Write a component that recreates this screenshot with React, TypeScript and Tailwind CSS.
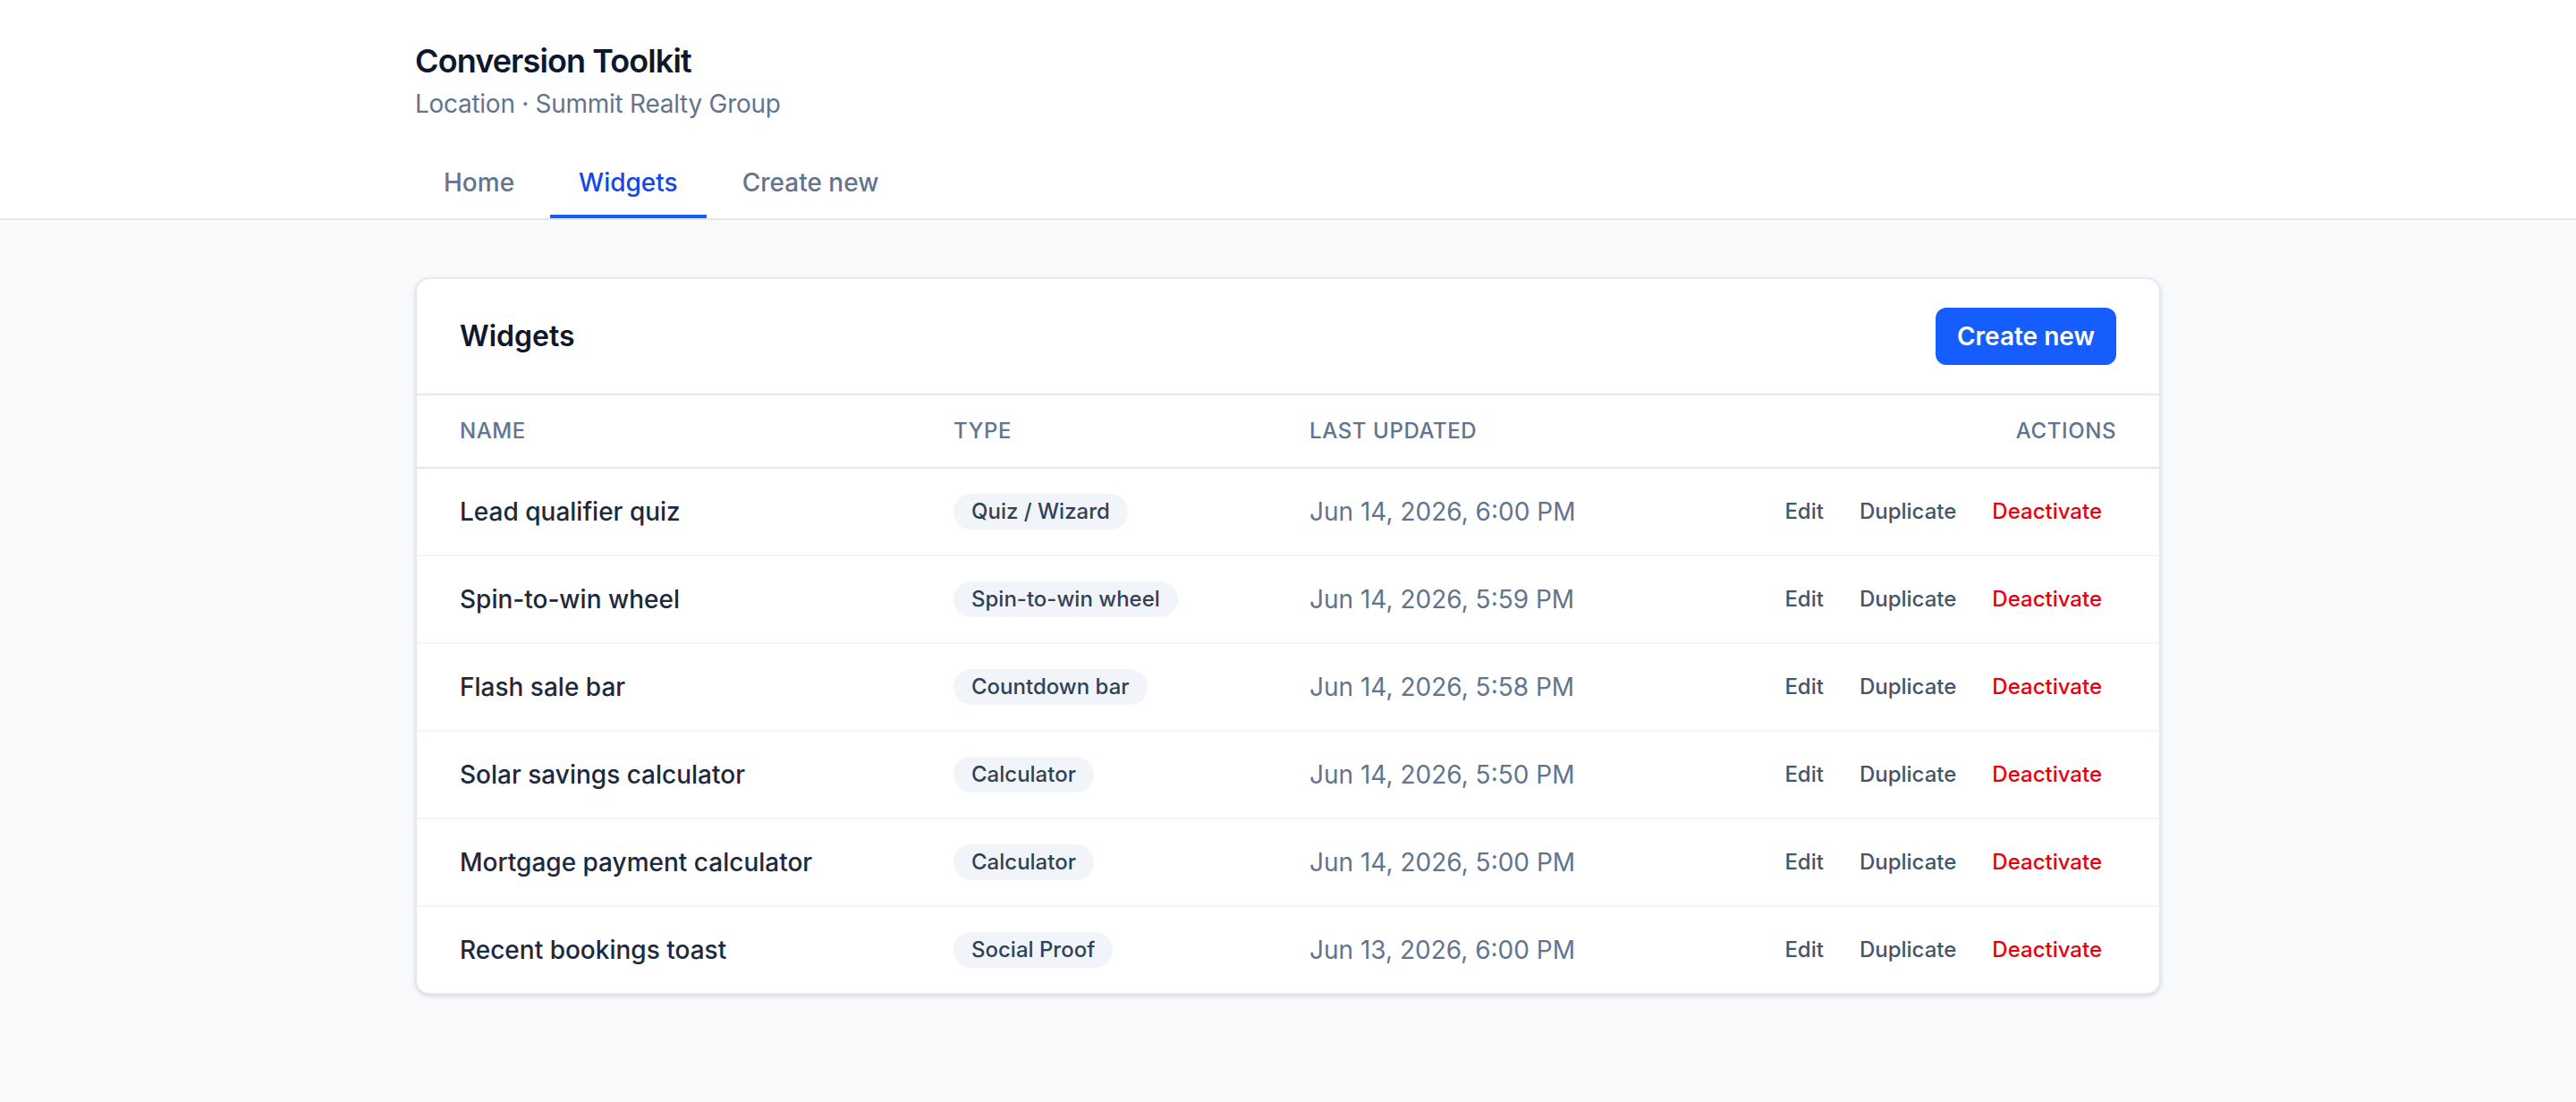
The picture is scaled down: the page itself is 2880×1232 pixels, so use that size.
import React from 'react'

interface Widget {
  name: string
  type: string
  updated: string
}

const widgets: Widget[] = [
  { name: 'Lead qualifier quiz', type: 'Quiz / Wizard', updated: 'Jun 14, 2026, 6:00 PM' },
  { name: 'Spin-to-win wheel', type: 'Spin-to-win wheel', updated: 'Jun 14, 2026, 5:59 PM' },
  { name: 'Flash sale bar', type: 'Countdown bar', updated: 'Jun 14, 2026, 5:58 PM' },
  { name: 'Solar savings calculator', type: 'Calculator', updated: 'Jun 14, 2026, 5:50 PM' },
  { name: 'Mortgage payment calculator', type: 'Calculator', updated: 'Jun 14, 2026, 5:00 PM' },
  { name: 'Recent bookings toast', type: 'Social Proof', updated: 'Jun 13, 2026, 6:00 PM' },
]

const tabs = ['Home', 'Widgets', 'Create new']

export default function App() {
  const active = 'Widgets'

  return (
    <div className="min-h-screen bg-slate-50 font-['Inter','Noto_Sans',sans-serif] antialiased">
      {/* page is drawn at 2x */}
      <div className="[zoom:2]">
        <header className="bg-white border-b border-slate-200">
          <div className="max-w-5xl mx-auto px-6 pt-5">
            <h1 className="text-lg font-semibold tracking-tight text-slate-900">Conversion Toolkit</h1>
            <p className="text-sm tracking-[-0.01em] text-slate-500">Location · Summit Realty Group</p>

            <nav className="mt-4 flex gap-1">
              {tabs.map((t) => (
                <button
                  key={t}
                  className={`px-4 py-2 text-sm font-medium border-b-2 ${
                    t === active
                      ? 'border-blue-600 text-blue-700'
                      : 'border-transparent text-slate-500 hover:text-slate-700'
                  }`}
                >
                  {t}
                </button>
              ))}
            </nav>
          </div>
        </header>

        <main className="max-w-5xl mx-auto px-6 py-8">
          <div className="bg-white rounded-lg border border-slate-200 shadow-sm overflow-hidden">
            {/* Card header */}
            <div className="flex items-center justify-between px-6 py-4 border-b border-slate-200">
              <h2 className="text-base font-semibold text-slate-900">Widgets</h2>
              <button className="px-3 py-1.5 rounded-md bg-blue-600 text-sm font-semibold text-white hover:bg-blue-700">
                Create new
              </button>
            </div>

            <table className="w-full table-fixed text-left">
              <thead className="border-b border-slate-200">
                <tr className="text-xs font-medium uppercase tracking-wide text-slate-500">
                  <th className="w-[276px] px-6 py-3 font-medium">Name</th>
                  <th className="w-[199px] px-6 py-3 font-medium">Type</th>
                  <th className="px-6 py-3 font-medium">Last updated</th>
                  <th className="w-[241px] px-6 py-3 font-medium text-right">Actions</th>
                </tr>
              </thead>
              <tbody className="divide-y divide-slate-100">
                {widgets.map((w) => (
                  <tr key={w.name} className="text-sm">
                    <td className="px-6 py-3.5 font-medium text-slate-800">{w.name}</td>
                    <td className="px-6 py-3.5">
                      <span className="flex w-fit rounded-full bg-slate-100 px-2.5 py-0.5 text-xs font-medium text-slate-700">
                        {w.type}
                      </span>
                    </td>
                    <td className="px-6 py-3.5 text-slate-500">{w.updated}</td>
                    <td className="px-6 py-3.5">
                      <div className="flex justify-end gap-1">
                        <button className="px-2 py-0.5 rounded text-xs font-medium text-slate-600 hover:bg-slate-100">
                          Edit
                        </button>
                        <button className="px-2 py-0.5 rounded text-xs font-medium text-slate-600 hover:bg-slate-100">
                          Duplicate
                        </button>
                        <button className="px-2 py-0.5 rounded text-xs font-medium text-red-600 hover:bg-red-50">
                          Deactivate
                        </button>
                      </div>
                    </td>
                  </tr>
                ))}
              </tbody>
            </table>
          </div>
        </main>
      </div>
    </div>
  )
}
